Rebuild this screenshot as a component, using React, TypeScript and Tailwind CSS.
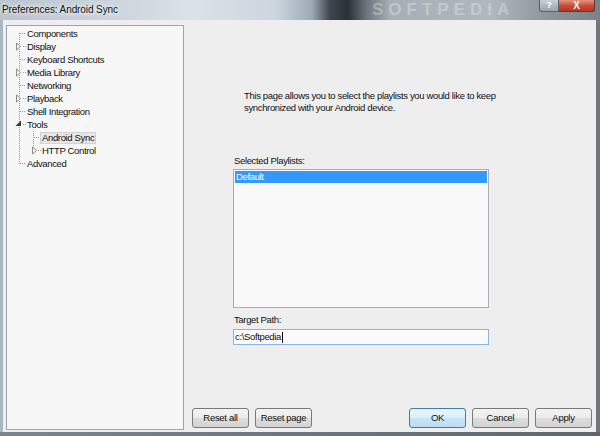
import React from "react";

const rows: { label: string; level: number; selected?: boolean }[] = [
  { label: "Components", level: 0 },
  { label: "Display", level: 0 },
  { label: "Keyboard Shortcuts", level: 0 },
  { label: "Media Library", level: 0 },
  { label: "Networking", level: 0 },
  { label: "Playback", level: 0 },
  { label: "Shell Integration", level: 0 },
  { label: "Tools", level: 0 },
  { label: "Android Sync", level: 1, selected: true },
  { label: "HTTP Control", level: 1 },
  { label: "Advanced", level: 0 },
];

const cy = (i: number) => 7.5 + 13 * i;

function TreeLines() {
  const dot = { stroke: "#9a9a9a", strokeDasharray: "1 1", strokeWidth: 1 };
  const plain = [0, 2, 4, 6, 10];
  const expand = [1, 3, 5];
  return (
    <svg className="absolute left-0 top-0 pointer-events-none" width="176" height="150">
      <line x1="12.5" y1="7" x2="12.5" y2="138" {...dot} />
      {plain.map((i) => (
        <line key={i} x1="13" y1={cy(i)} x2="19" y2={cy(i)} {...dot} />
      ))}
      {expand.map((i) => (
        <g key={i}>
          <path d={`M9.5 ${cy(i) - 3.5} L13.5 ${cy(i)} L9.5 ${cy(i) + 3.5} Z`} fill="#fafafa" stroke="#8a8a8a" />
          <line x1="16" y1={cy(i)} x2="19" y2={cy(i)} {...dot} />
        </g>
      ))}
      <path d={`M14 ${cy(7) - 4} L14 ${cy(7) + 1.5} L8.5 ${cy(7) + 1.5} Z`} fill="#3a3a3a" />
      <line x1="16" y1={cy(7)} x2="19" y2={cy(7)} {...dot} />
      <line x1="26.5" y1="105" x2="26.5" y2="125" {...dot} />
      <line x1="27" y1={cy(8)} x2="33" y2={cy(8)} {...dot} />
      <path d={`M25.5 ${cy(9) - 3.5} L29.5 ${cy(9)} L25.5 ${cy(9) + 3.5} Z`} fill="#fafafa" stroke="#8a8a8a" />
      <line x1="31" y1={cy(9)} x2="34" y2={cy(9)} {...dot} />
    </svg>
  );
}

function Btn({ label, primary }: { label: string; primary?: boolean }) {
  return (
    <div
      className={
        primary
          ? "h-[20px] w-[57px] flex items-center justify-center whitespace-nowrap rounded-[3px] border border-[#3c7fb1] bg-[linear-gradient(#e9f4fb_0%,#dbeefa_50%,#c9e5f7_50%,#bcdcf2_100%)] text-[9.5px] tracking-[-0.3px] leading-none"
          : "h-[20px] w-[57px] flex items-center justify-center whitespace-nowrap rounded-[3px] border border-[#7a7a7a] bg-[linear-gradient(#f3f3f3_0%,#ececec_50%,#dedede_50%,#d2d2d2_100%)] text-[9.5px] tracking-[-0.3px] leading-none"
      }
    >
      {label}
    </div>
  );
}

export default function App() {
  return (
    <div className="w-[600px] h-[436px] overflow-hidden flex flex-col bg-[linear-gradient(90deg,#aab6c1_0%,#b9c3cc_40%,#8f99a2_60%,#6f7880_100%)] font-['Liberation_Sans',Arial,sans-serif] text-[#111]">
      {/* title bar */}
      <div className="relative h-[20px] shrink-0 flex overflow-hidden bg-[linear-gradient(90deg,#b9c4cf_0%,#cad4dc_18%,#dbe2e8_32%,#ccd6df_46%,#9ea9b4_52%,#3d464e_55%,#2a3137_58%,#6a737b_61%,#a7afb6_65%,#b0b7bd_82%,#8e969d_91%,#7b838a_100%)]">
        <span className="relative z-10 pl-[2px] pt-[3px] text-[10px] tracking-[-0.1px] leading-[13px] whitespace-nowrap [text-shadow:0_0_4px_#fff,0_0_7px_#fff]">
          Preferences: Android Sync
        </span>
        <span className="absolute left-[372px] top-0 text-[17px] font-bold leading-[20px] tracking-[5px] text-white/30 whitespace-nowrap">
          SOFTPEDIA
        </span>
        <div className="relative z-10 ml-auto mr-[5px] flex h-[12px]">
          <div className="w-[20px] h-[12px] rounded-bl-[3px] border border-t-0 border-[#5b636a] bg-[linear-gradient(#c9d0d6,#9aa3ab)] flex items-center justify-center text-[9px] font-bold text-white leading-none">
            ?
          </div>
          <div className="w-[36px] h-[12px] rounded-br-[3px] border border-t-0 border-l-0 border-[#5b3a33] bg-[linear-gradient(#e2937f,#c74b33_55%,#b8361f)] flex items-center justify-center text-[10px] font-bold text-white leading-none">
            X
          </div>
        </div>
      </div>

      {/* main */}
      <div className="relative flex-1 flex ml-[3px] mr-[4px] bg-[#eeeeee]">
        {/* tree */}
        <div className="relative ml-[3px] mt-[5px] mb-[2px] w-[178px] border border-[#a3a3a3] bg-[#f7f7f7] pt-[1px] text-[9.5px] tracking-[-0.35px]">
          <TreeLines />
          {rows.map((r, i) => (
            <div key={i} className="h-[13px] flex items-center leading-[13px] whitespace-nowrap">
              {r.selected ? (
                <span className="ml-[33px] h-[12px] flex items-center border border-[#d3d3d3] bg-[#e6e6e6] px-[1px]">{r.label}</span>
              ) : (
                <span className={r.level === 1 ? "ml-[35px]" : "ml-[20px]"}>{r.label}</span>
              )}
            </div>
          ))}
        </div>

        {/* right page */}
        <div className="relative flex-1 flex flex-col text-[9.5px] tracking-[-0.35px]">
          <div className="mt-[70px] pl-[60px] leading-[12px] whitespace-nowrap">
            <div>This page allows you to select the playlists you would like to keep</div>
            <div>synchronized with your Android device.</div>
          </div>

          <div className="mt-[41px] pl-[50px] leading-[12px]">Selected Playlists:</div>
          <div className="relative mt-[2px] ml-[49px] w-[256px] h-[139px] border border-[#a9adb3] bg-[#f9f9f9] p-[1px]">
            <div className="h-[12px] bg-[#3399ff] text-white pl-[1px] leading-[12px]">Default</div>
          </div>

          <div className="mt-[6px] pl-[50px] leading-[12px]">Target Path:</div>
          <div className="mt-[3px] ml-[49px] w-[256px] h-[16px] border border-[#84b5e4] bg-[#fbfbfb] flex items-center pl-[1px] leading-[12px]">
            <span>c:\Softpedia</span>
            <span className="ml-[1px] w-[1px] h-[11px] bg-black" />
          </div>

          <div className="mt-auto mb-[4px] flex pl-[8px] pr-[4px]">
            <div className="flex gap-[6px]">
              <Btn label="Reset all" />
              <Btn label="Reset page" />
            </div>
            <div className="ml-auto flex gap-[6px]">
              <Btn label="OK" primary />
              <Btn label="Cancel" />
              <Btn label="Apply" />
            </div>
          </div>
        </div>
      </div>
      <div className="h-[4px] shrink-0 bg-[linear-gradient(90deg,#7b858e,#5f676e)]" />
    </div>
  );
}
